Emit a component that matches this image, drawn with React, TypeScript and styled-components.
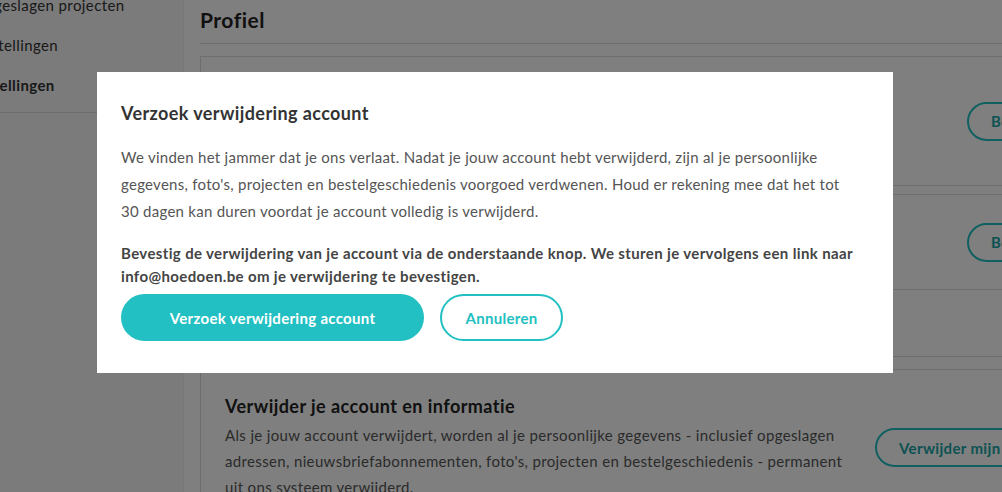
import { createGlobalStyle } from "styled-components";
import styled from "styled-components";

const teal = "#22c0c2";

const GlobalStyle = createGlobalStyle`
  html, body {
    margin: 0;
    padding: 0;
    overflow: hidden;
    background: #fff;
  }
  body {
    font-family: Lato, "Open Sans", sans-serif;
    color: #333;
  }
`;

const sidebarItems = [
  { label: "Opgeslagen projecten", active: false },
  { label: "Bestellingen", active: false },
  { label: "Instellingen", active: true },
];

export default function App() {
  return (
    <>
      <GlobalStyle />
      <Page>
        <Sidebar>
          <SidebarList>
            {sidebarItems.map((item) => (
              <SidebarItem key={item.label} active={item.active}>
                {item.label}
              </SidebarItem>
            ))}
          </SidebarList>
          <SidebarDivider />
        </Sidebar>

        <Main>
          <PageTitle>Profiel</PageTitle>

          <Card>
            <CardRow height={128}>
              <CardText width={742}>
                <CardTitle>Persoonlijke gegevens</CardTitle>
                <CardBody>Je naam, e-mailadres en telefoonnummer.</CardBody>
              </CardText>
              <OutlineButton>Bewerken</OutlineButton>
            </CardRow>
          </Card>

          <Card gap={8}>
            <CardRow height={94}>
              <CardText width={742}>
                <CardTitle>Wachtwoord</CardTitle>
                <CardBody>Wijzig je wachtwoord.</CardBody>
              </CardText>
              <OutlineButton>Bewerken</OutlineButton>
            </CardRow>
            <CardRow height={67} divided>
              <CardText width={742}>
                <CardBody>Nieuwsbrief</CardBody>
              </CardText>
            </CardRow>
          </Card>

          <Card gap={12}>
            <CardRow height={140} top>
              <CardText width={650}>
                <CardTitle>Verwijder je account en informatie</CardTitle>
                <CardBody>
                  Als je jouw account verwijdert, worden al je persoonlijke
                  gegevens - inclusief opgeslagen adressen,
                  nieuwsbriefabonnementen, foto's, projecten en
                  bestelgeschiedenis - permanent uit ons systeem verwijderd.
                </CardBody>
              </CardText>
              <OutlineButton offset={34}>Verwijder mijn account</OutlineButton>
            </CardRow>
          </Card>
        </Main>
      </Page>

      <Overlay />
      <Modal role="dialog">
        <ModalTitle>Verzoek verwijdering account</ModalTitle>
        <ModalText>
          We vinden het jammer dat je ons verlaat. Nadat je jouw account hebt
          verwijderd, zijn al je persoonlijke gegevens, foto's, projecten en
          bestelgeschiedenis voorgoed verdwenen. Houd er rekening mee dat het
          tot 30 dagen kan duren voordat je account volledig is verwijderd.
        </ModalText>
        <ModalStrong>
          Bevestig de verwijdering van je account via de onderstaande knop. We
          sturen je vervolgens een link naar info@hoedoen.be om je verwijdering
          te bevestigen.
        </ModalStrong>
        <ModalActions>
          <PrimaryButton>Verzoek verwijdering account</PrimaryButton>
          <SecondaryButton>Annuleren</SecondaryButton>
        </ModalActions>
      </Modal>
    </>
  );
}

const Page = styled.div`
  display: flex;
  height: 492px;
  overflow: hidden;
`;

const Sidebar = styled.aside`
  flex: 0 0 183px;
  background: #f6f6f6;
  border-right: 1px solid #ececec;
  overflow: hidden;
`;

const SidebarList = styled.ul`
  list-style: none;
  margin: -15px 0 0 -27px;
  padding: 0;
`;

const SidebarItem = styled.li<{ active: boolean }>`
  height: 40px;
  line-height: 40px;
  font-size: 15px;
  letter-spacing: 0.4px;
  white-space: nowrap;
  color: #333;
  font-weight: ${(p) => (p.active ? 700 : 400)};
`;

const SidebarDivider = styled.hr`
  margin: 7px 0 0;
  border: 0;
  border-top: 1px solid #dcdcdc;
`;

const Main = styled.main`
  flex: 1;
  padding-left: 16px;
  overflow: hidden;
`;

const PageTitle = styled.h1`
  margin: 0;
  width: 900px;
  height: 44px;
  box-sizing: border-box;
  padding-top: 8px;
  font-size: 21px;
  line-height: 24px;
  letter-spacing: 0.5px;
  font-weight: 700;
  color: #222;
  border-bottom: 1px solid #dcdcdc;
`;

const Card = styled.section<{ gap?: number }>`
  width: 960px;
  margin-top: ${(p) => p.gap ?? 12}px;
  border: 1px solid #dcdcdc;
`;

const CardRow = styled.div<{ height: number; divided?: boolean; top?: boolean }>`
  display: flex;
  align-items: ${(p) => (p.top ? "flex-start" : "center")};
  height: ${(p) => p.height}px;
  padding: ${(p) => (p.top ? "24px" : "0")} 24px 0;
  box-sizing: border-box;
  border-top: ${(p) => (p.divided ? "1px solid #dcdcdc" : "none")};
`;

const CardText = styled.div<{ width: number }>`
  flex: 0 0 ${(p) => p.width}px;
`;

const CardTitle = styled.h3`
  margin: 0 0 4px;
  font-size: 18px;
  line-height: 24px;
  letter-spacing: 0.45px;
  font-weight: 700;
  color: #222;
`;

const CardBody = styled.p`
  margin: 0;
  font-size: 15px;
  line-height: 26px;
  letter-spacing: 0.35px;
  color: #555;
  width: 626px;
`;

const OutlineButton = styled.button<{ offset?: number }>`
  margin-top: ${(p) => p.offset ?? 0}px;
  height: 39px;
  padding: 0 22px;
  border: 2px solid ${teal};
  border-radius: 20px;
  background: #fff;
  color: #1aa5a7;
  font-family: inherit;
  font-size: 15px;
  letter-spacing: 0.35px;
  font-weight: 700;
  white-space: nowrap;
`;

const Overlay = styled.div`
  position: fixed;
  inset: 0;
  background: rgba(0, 0, 0, 0.5);
`;

const Modal = styled.div`
  position: fixed;
  left: 97px;
  top: 72px;
  width: 796px;
  box-sizing: border-box;
  padding: 30px 24px 32px;
  background: #fff;
`;

const ModalTitle = styled.h2`
  margin: 0;
  font-size: 18px;
  line-height: 22px;
  letter-spacing: 0.4px;
  font-weight: 700;
  color: #333;
`;

const ModalText = styled.p`
  margin: 20px 0 0;
  max-width: 738px;
  font-size: 15px;
  line-height: 27px;
  letter-spacing: 0.27px;
  color: #555;
`;

const ModalStrong = styled.p`
  margin: 17px 0 0;
  font-size: 15px;
  line-height: 23px;
  letter-spacing: 0.37px;
  font-weight: 700;
  color: #444;
`;

const ModalActions = styled.div`
  display: flex;
  gap: 16px;
  margin-top: 6px;
`;

const PrimaryButton = styled.button`
  width: 303px;
  height: 47px;
  border: 0;
  border-radius: 24px;
  background: ${teal};
  color: #fff;
  font-family: inherit;
  font-size: 15px;
  letter-spacing: 0.3px;
  font-weight: 700;
`;

const SecondaryButton = styled.button`
  width: 123px;
  height: 47px;
  border: 2px solid ${teal};
  border-radius: 24px;
  background: #fff;
  color: ${teal};
  font-family: inherit;
  font-size: 15px;
  letter-spacing: 0.3px;
  font-weight: 700;
`;
